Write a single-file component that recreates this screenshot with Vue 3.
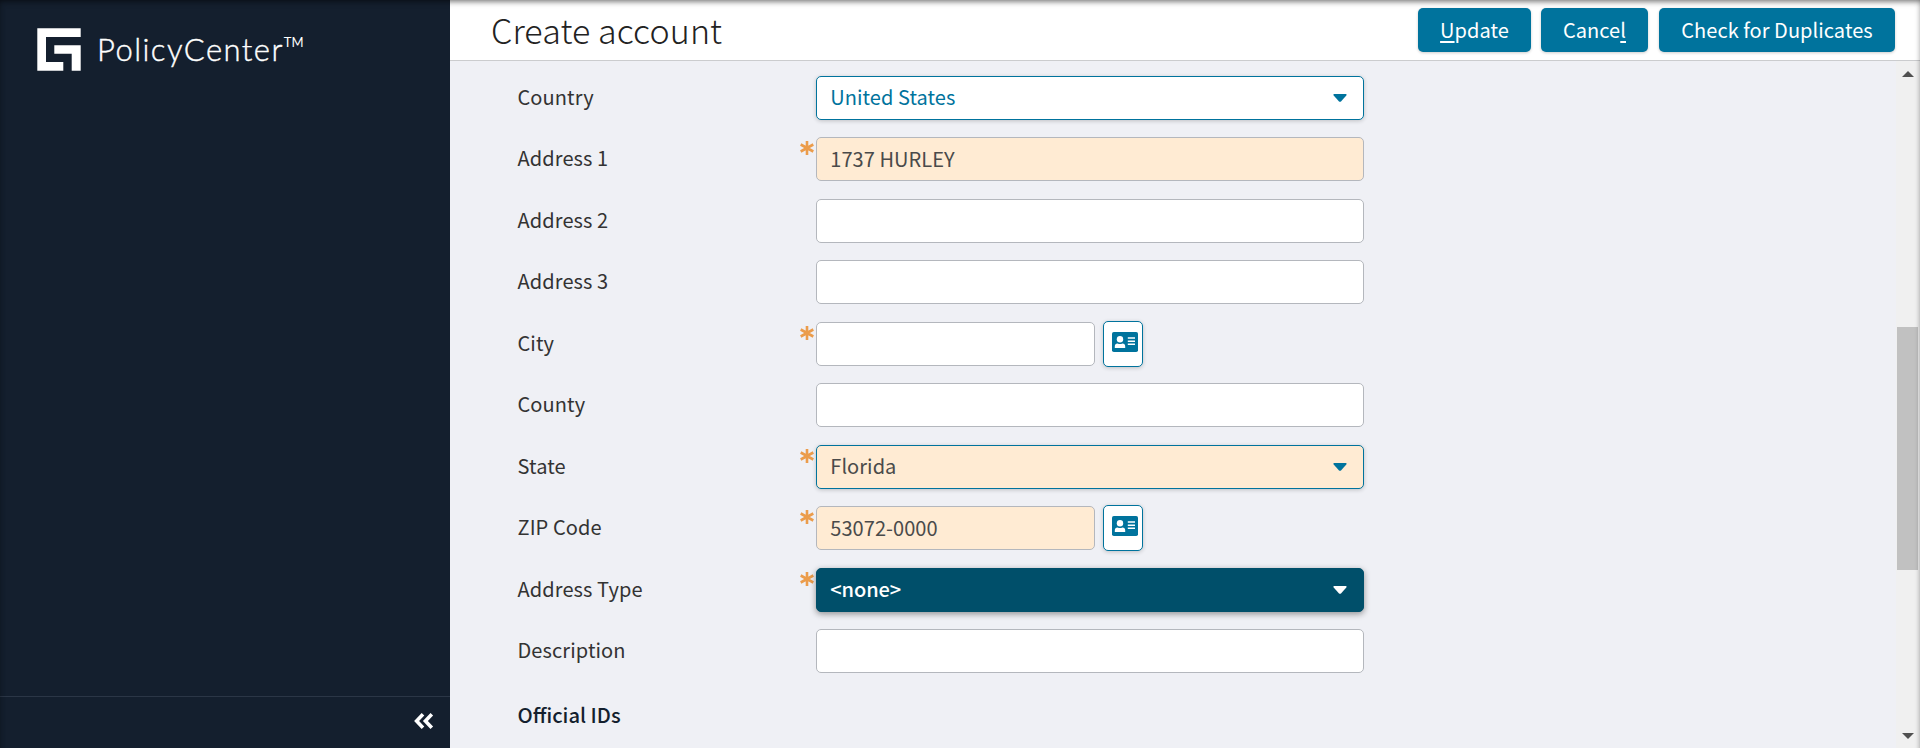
<script setup>
const rows = [
  { label: 'Country', kind: 'select', value: 'United States', look: 'link' },
  { label: 'Address 1', kind: 'input', value: '1737 HURLEY', look: 'filled', required: true },
  { label: 'Address 2', kind: 'input' },
  { label: 'Address 3', kind: 'input' },
  { label: 'City', kind: 'input', required: true, short: true },
  { label: 'County', kind: 'input' },
  { label: 'State', kind: 'select', value: 'Florida', look: 'filled', required: true },
  { label: 'ZIP Code', kind: 'input', value: '53072-0000', look: 'filled', required: true, short: true },
  { label: 'Address Type', kind: 'select', value: '<none>', look: 'active', required: true },
  { label: 'Description', kind: 'input' },
]
</script>

<template>
  <div class="page">
    <aside class="sidebar">
      <div class="brand">
        <svg class="logo" width="44" height="43" viewBox="0 0 44 43" fill="#fff">
          <path d="M.3 .3H43.7V9H9V34H26.3V42.7H.3Z" />
          <path d="M17.3 17.2H43.7V42.7H34.7V25.7H17.3Z" />
        </svg>
        <span class="product">PolicyCenter</span><span class="tm">TM</span>
      </div>
      <div class="collapse">
        <svg width="20" height="16" viewBox="0 0 20 16" fill="none" stroke="#fff" stroke-width="3.6">
          <path d="M9 1.3L2.6 8L9 14.7M17.8 1.3L11.4 8L17.8 14.7" />
        </svg>
      </div>
    </aside>

    <main class="main">
      <header class="header">
        <h1 class="title">Create account</h1>
        <div class="actions">
          <button class="btn update"><span><u>U</u>pdate</span></button>
          <button class="btn cancel"><span>Cance<u>l</u></span></button>
          <button class="btn dupes"><span>Check for Duplicates</span></button>
        </div>
      </header>

      <div class="body">
        <div class="form">
          <div v-for="row in rows" :key="row.label" class="row">
            <div class="label">{{ row.label }}</div>
            <div class="star">
              <svg v-if="row.required" width="14" height="14" viewBox="0 0 14 14" stroke="#eb9c4b" stroke-width="2.6">
                <path d="M7 0V14M.7 3.5L13.3 10.5M13.3 3.5L.7 10.5" />
              </svg>
            </div>
            <div class="field" :class="[row.kind, row.look, { short: row.short }]">
              <span class="value">{{ row.value }}</span>
              <svg v-if="row.kind === 'select'" class="caret" width="14" height="8" viewBox="0 0 14 8" fill="currentColor">
                <path d="M1 0H13Q14 .4 13.3 1.4L8 7.4Q7 8.3 6 7.4L.7 1.4Q0 .4 1 0Z" />
              </svg>
            </div>
            <button v-if="row.short" class="lookup">
              <svg width="26" height="20" viewBox="0 0 26 20">
                <rect width="26" height="20" rx="1.8" fill="#00739d" />
                <g fill="#fff">
                  <circle cx="8" cy="7.2" r="3.2" />
                  <path d="M2.8 15.9V14.4Q2.8 11.5 5.6 11.5Q8 12.6 10.4 11.5Q13.2 11.5 13.2 14.4V15.9Z" />
                  <path d="M15.8 5.2H23V6.7H15.8ZM15.8 8.4H23V9.9H15.8ZM15.8 11.5H23V13H15.8Z" />
                </g>
              </svg>
            </button>
          </div>
          <h2 class="section">Official IDs</h2>
        </div>
        <div class="scrollbar">
          <svg width="12" height="6" viewBox="0 0 12 6" fill="#505050"><path d="M0 6L6 0L12 6Z" /></svg>
          <div class="thumb"></div>
          <svg width="12" height="6" viewBox="0 0 12 6" fill="#505050"><path d="M0 0L6 6L12 0Z" /></svg>
        </div>
      </div>
    </main>
  </div>
</template>

<style>
body {
  overflow: hidden;
}
</style>

<style scoped>
* {
  box-sizing: border-box;
}
.page {
  position: relative;
  display: flex;
  width: 1920px;
  height: 748px;
  overflow: hidden;
  background: #eff0f5;
  font-family: "Noto Sans CJK SC", "Noto Sans", sans-serif;
  color: #333;
}
.page::after {
  content: "";
  position: absolute;
  inset: 0 0 -12px;
  box-shadow: inset 0 3px 6px -2px rgba(0, 0, 0, 0.6), inset 0 0 6px rgba(0, 0, 0, 0.07);
  pointer-events: none;
}
.sidebar {
  display: flex;
  flex-direction: column;
  justify-content: space-between;
  width: 450px;
  flex: none;
  background: #141f2e;
}
.brand {
  display: flex;
  align-items: flex-start;
  padding: 28px 0 0 37px;
  color: #fff;
  font-family: Lato, sans-serif;
  font-weight: 300;
}
.logo {
  flex: none;
}
.product {
  margin-left: 16px;
  font-size: 31px;
  line-height: 43px;
  letter-spacing: 1.45px;
  -webkit-text-stroke: 0.4px #fff;
}
.tm {
  font-size: 13px;
  line-height: 29px;
  font-weight: 400;
}
.collapse {
  display: flex;
  justify-content: flex-end;
  align-items: center;
  height: 52px;
  padding: 0 16px 4px 0;
  border-top: 1px solid #2b3646;
}
.main {
  display: flex;
  flex-direction: column;
  flex: 1;
}
.header {
  display: flex;
  justify-content: space-between;
  height: 61px;
  padding: 8px 25px 0 41px;
  background: #fff;
  border-bottom: 1px solid #cbccce;
}
.title {
  margin: 0;
  font-size: 34px;
  font-weight: 300;
  line-height: 43px;
  letter-spacing: 0.1px;
  color: #222;
}
.actions {
  display: flex;
}
.btn {
  height: 44px;
  padding: 0;
  border: 0;
  border-radius: 5px;
  background: #00739d;
  color: #fff;
  font: 400 20px/44px "Noto Sans CJK SC", sans-serif;
  letter-spacing: 0.05px;
  box-shadow: 0 1px 3px rgba(0, 0, 0, 0.2);
}
.btn u {
  text-underline-offset: 3px;
}
.update {
  width: 113px;
}
.cancel {
  width: 107px;
  margin-left: 10px;
}
.dupes {
  width: 236px;
  margin-left: 11px;
}
.body {
  display: flex;
  justify-content: space-between;
  height: 687px;
}
.form {
  padding: 14.9px 0 0 67.5px;
}
.row {
  display: flex;
  align-items: flex-start;
  height: 61.5px;
}
.label {
  width: 282.5px;
  font-size: 20px;
  line-height: 41px;
  letter-spacing: 0.1px;
}
.star {
  width: 16px;
  height: 20px;
  padding-top: 4px;
}
.star svg {
  display: block;
}
.field {
  display: flex;
  justify-content: space-between;
  align-items: center;
  width: 548px;
  height: 44px;
  padding: 0 16px 0 13.3px;
  border: 1px solid #b4b7bd;
  border-radius: 5px;
  background: #fff;
  font-size: 20px;
  line-height: 42px;
  letter-spacing: 0.05px;
  color: #4a4a4a;
}
.select {
  padding-bottom: 1px;
  border-color: #00739d;
  box-shadow: 0 1px 4px rgba(0, 0, 0, 0.2);
}
.caret {
  margin-top: 1px;
  color: #00739d;
}
.select .value {
  line-height: 40px;
}
.link {
  color: #00739d;
}
.filled {
  background: #ffebd3;
}
.active {
  border-color: #004f6a;
  background: #004f6a;
  color: #fff;
  font-weight: 500;
  letter-spacing: -0.1px;
  box-shadow: 0 2px 6px rgba(0, 0, 0, 0.4);
}
.active .caret {
  color: #fff;
}
.short {
  width: 279px;
}
.lookup {
  display: flex;
  justify-content: flex-end;
  width: 40px;
  height: 46px;
  margin: -1px 0 0 8px;
  padding: 10px 4px 0 0;
  border: 1px solid #00739d;
  border-radius: 5px;
  background: #fff;
  box-shadow: 0 1px 4px rgba(0, 0, 0, 0.2);
}
.section {
  margin: 2px 0 0;
  font-size: 20.2px;
  font-weight: 500;
  line-height: 43px;
  color: #141f2e;
}
.scrollbar {
  display: flex;
  flex-direction: column;
  align-items: center;
  width: 24px;
  padding: 10px 1px 0 0;
  background: #f0f0f0;
}
.thumb {
  width: 21px;
  height: 243px;
  margin: 250px 0 163px;
  background: #c1c1c1;
}
</style>
